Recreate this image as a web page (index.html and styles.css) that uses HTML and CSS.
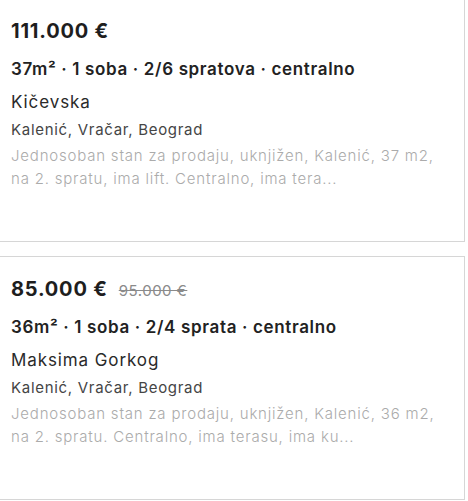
FILE: index.html
```html
<!DOCTYPE html>
<html lang="sr">
<head>
<meta charset="utf-8">
<link rel="stylesheet" href="styles.css">
</head>
<body>
<div class="list">
  <article class="card">
    <div class="price-row"><span class="price">111.000 €</span></div>
    <div class="specs">37m² · 1 soba · 2/6 spratova · centralno</div>
    <div class="street">Kičevska</div>
    <div class="location">Kalenić, Vračar, Beograd</div>
    <p class="desc"><span class="line">Jednosoban stan za prodaju, uknjižen, Kalenić, 37 m2,</span><span class="line">na 2. spratu, ima lift. Centralno, ima tera...</span></p>
  </article>
  <article class="card">
    <div class="price-row"><span class="price">85.000 €</span><span class="old-price">95.000 €</span></div>
    <div class="specs">36m² · 1 soba · 2/4 sprata · centralno</div>
    <div class="street">Maksima Gorkog</div>
    <div class="location">Kalenić, Vračar, Beograd</div>
    <p class="desc"><span class="line">Jednosoban stan za prodaju, uknjižen, Kalenić, 36 m2,</span><span class="line">na 2. spratu. Centralno, ima terasu, ima ku...</span></p>
  </article>
</div>
</body>
</html>
```

FILE: styles.css
```css
* { box-sizing: border-box; }
html, body { margin: 0; padding: 0; background: #fff; }
body { font-family: "Inter", "Open Sans", sans-serif; }
.list {
  display: flex;
  flex-direction: column;
  gap: 14px;
  margin-top: -2px;
  margin-left: -2px;
  width: 467px;
}
.card {
  border: 1px solid #d6d6d6;
  height: 244px;
  padding: 17px 12px 0 12px;
  display: flex;
  flex-direction: column;
}
.price-row { display: flex; align-items: baseline; gap: 11px; line-height: 30px; height: 30px; }
.price { font-size: 20px; font-weight: 700; color: #1e1e1e; letter-spacing: 0.8px; }
.old-price { font-size: 15px; color: #8a8a8a; text-decoration: line-through; letter-spacing: 0.5px; }
.specs { font-size: 17px; font-weight: 600; color: #222; margin-top: 10px; line-height: 26px; letter-spacing: 0.65px; }
.street { font-size: 17px; color: #2a2a2a; margin-top: 7px; line-height: 26px; letter-spacing: 0.9px; }
.location { font-size: 15px; color: #454545; margin-top: 4px; line-height: 22px; letter-spacing: 0.7px; }
.desc { margin: 3px 0 0; font-size: 15px; color: #ababab; line-height: 23px; font-weight: 300; letter-spacing: 0.8px; }
.line { display: block; white-space: nowrap; }
```
